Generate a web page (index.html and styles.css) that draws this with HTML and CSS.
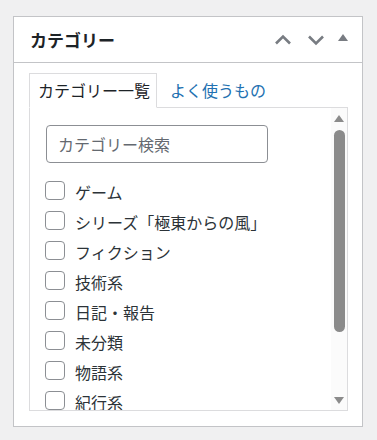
FILE: index.html
```html
<!DOCTYPE html>
<html lang="ja">
<head>
    <meta charset="UTF-8">
    <meta name="viewport" content="width=device-width, initial-scale=1.0">
    <title>カテゴリー</title>
    <link rel="stylesheet" href="styles.css">
</head>
<body>

    <div class="postbox">
        <div class="postbox-header">
            <h2>カテゴリー</h2>
            <div class="handle-actions">
                <button class="handle-btn" aria-label="上へ移動">
                    <svg width="18" height="18" viewBox="0 0 18 18"><path d="M2 12.5 L9 5.5 L16 12.5" fill="none" stroke="#787c82" stroke-width="2.6"/></svg>
                </button>
                <button class="handle-btn" aria-label="下へ移動">
                    <svg width="18" height="18" viewBox="0 0 18 18"><path d="M2 5.5 L9 12.5 L16 5.5" fill="none" stroke="#787c82" stroke-width="2.6"/></svg>
                </button>
                <button class="handle-btn toggle" aria-label="パネルを切り替え">
                    <svg width="10" height="7" viewBox="0 0 10 7"><path d="M0 7 L5 0 L10 7 Z" fill="#787c82"/></svg>
                </button>
            </div>
        </div>

        <div class="inside">
            <ul class="category-tabs">
                <li class="tabs">カテゴリー一覧</li>
                <li><a href="#">よく使うもの</a></li>
            </ul>

            <div class="tabs-panel">
                <div class="panel-scroll">
                    <input type="text" class="cat-search" placeholder="カテゴリー検索">
                    <ul class="categorychecklist">
                        <li><label><input type="checkbox"><span>ゲーム</span></label></li>
                        <li><label><input type="checkbox"><span>シリーズ「極東からの風」</span></label></li>
                        <li><label><input type="checkbox"><span>フィクション</span></label></li>
                        <li><label><input type="checkbox"><span>技術系</span></label></li>
                        <li><label><input type="checkbox"><span>日記・報告</span></label></li>
                        <li><label><input type="checkbox"><span>未分類</span></label></li>
                        <li><label><input type="checkbox"><span>物語系</span></label></li>
                        <li><label><input type="checkbox"><span>紀行系</span></label></li>
                    </ul>
                </div>
                <div class="fake-scrollbar">
                    <span class="arrow-up"></span>
                    <div class="track"><div class="thumb"></div></div>
                    <span class="arrow-down"></span>
                </div>
            </div>
        </div>
    </div>

</body>
</html>
```

FILE: styles.css
```css
* {
    margin: 0;
    padding: 0;
    box-sizing: border-box;
    font-family: "Noto Sans CJK JP", "Liberation Sans", sans-serif;
}

body {
    background-color: #f0f0f1;
    color: #2c3338;
    padding: 16px 0 0 13px;
}

.postbox {
    width: 350px;
    height: 411px;
    background: #fff;
    border: 1px solid #c3c4c7;
    display: flex;
    flex-direction: column;
}

.postbox-header {
    flex-shrink: 0;
    height: 46px;
    border-bottom: 1px solid #c3c4c7;
    display: flex;
    align-items: center;
    justify-content: space-between;
    padding: 0 8px 0 16px;
}

.postbox-header h2 {
    font-size: 17px;
    font-weight: 700;
    color: #1d2327;
    padding-bottom: 1px;
}

.handle-actions {
    display: flex;
    align-items: center;
}

.handle-btn {
    background: none;
    border: none;
    width: 33px;
    height: 36px;
    display: flex;
    align-items: center;
    justify-content: center;
}

.handle-btn.toggle {
    width: 22px;
    padding-bottom: 4px;
}

.inside {
    flex: 1;
    min-height: 0;
    padding: 10px 14px 15px 15px;
    display: flex;
    flex-direction: column;
}

.category-tabs {
    flex-shrink: 0;
    list-style: none;
    display: flex;
    font-size: 16px;
}

.category-tabs li {
    height: 35px;
    line-height: 33px;
    padding: 0 6px 0 8px;
    border: 1px solid transparent;
    margin-bottom: -1px;
    position: relative;
}

.category-tabs li.tabs {
    background: #fff;
    border-color: #dcdcde;
    border-bottom-color: #fff;
    color: #1d2327;
}

.category-tabs li + li {
    margin-left: 4px;
}

.category-tabs a {
    color: #2271b1;
    text-decoration: none;
}

.tabs-panel {
    flex: 1;
    min-height: 0;
    border: 1px solid #dcdcde;
    display: flex;
    overflow: hidden;
}

.panel-scroll {
    flex: 1;
    padding: 17px 0 0 15px;
    overflow: hidden;
}

.cat-search {
    display: block;
    width: 222px;
    height: 38px;
    margin-left: 1px;
    border: 1px solid #8c8f94;
    border-radius: 4px;
    padding: 0 11px;
    font-size: 16px;
    color: #2c3338;
}

.cat-search::placeholder {
    color: #646970;
}

.categorychecklist {
    list-style: none;
    margin-top: 12px;
    font-size: 16px;
}

.categorychecklist li {
    height: 30px;
}

.categorychecklist label {
    display: flex;
    align-items: center;
    height: 30px;
    color: #2c3338;
}

.categorychecklist span {
    padding-top: 3px;
}

.categorychecklist input {
    appearance: none;
    flex-shrink: 0;
    width: 20px;
    height: 19px;
    border: 1px solid #8c8f94;
    border-radius: 4px;
    background: #fff;
    margin-right: 10px;
}

.fake-scrollbar {
    width: 16px;
    background: #fbfbfb;
    display: flex;
    flex-direction: column;
    align-items: center;
    padding: 7px 0 6px;
}

.arrow-up, .arrow-down {
    width: 0;
    height: 0;
    border-left: 5px solid transparent;
    border-right: 5px solid transparent;
}

.arrow-up {
    border-bottom: 7px solid #8b8b8b;
}

.arrow-down {
    border-top: 7px solid #8b8b8b;
}

.track {
    flex: 1;
    width: 11px;
    padding: 8px 0 0;
}

.thumb {
    height: 202px;
    background: #8b8b8b;
    border-radius: 6px;
}
```
